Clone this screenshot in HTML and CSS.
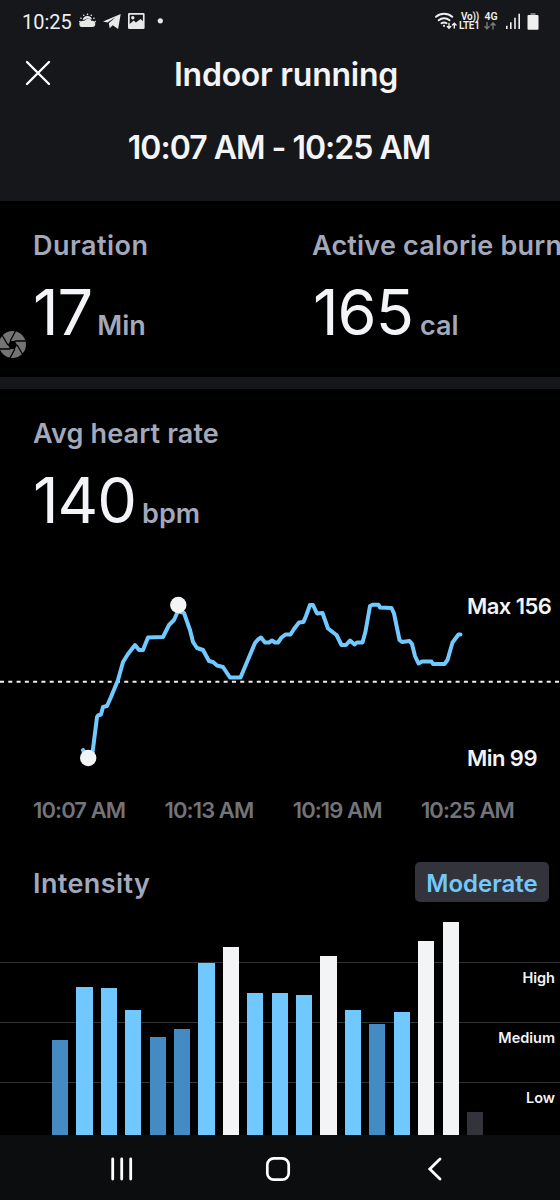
FILE: index.html
```html
<!DOCTYPE html>
<html lang="en">
<head>
<meta charset="utf-8">
<title>Indoor running</title>
<link rel="stylesheet" href="styles.css">
</head>
<body>
<div class="screen">
  <header class="header">
    <div class="status">
      <span class="clock">10:25</span>
      <svg class="status-left" width="90" height="20" viewBox="78 11 90 20" fill="#e8e8e8">
        <path d="M83.500 27a3 3 0 0 1-.3-6c.8-.3 1.500-.2 1.900.1a4.300 4.300 0 0 1 7.600-.2c2-.4 3.700 1 3.600 3.200a3 3 0 0 1-3 2.900z"/>
        <path d="M83.700 19.600a5 5 0 0 1 9.300-.6l-1.400.5a4.600 4.600 0 0 0-6.500.6z"/>
        <g stroke="#e8e8e8" stroke-width="1.500" stroke-linecap="round"><path d="M88.500 14.300v.1M84.700 15.200l.1.100M92.300 15.200l-.1.100M81.900 18.200l.1.100M95 18.200l-.1.100M80.800 21.500h.1M96.300 21.500h-.1"/></g>
        <path d="M104 21.500 121.700 14l-2.600 15-5.400-3.700-3 2.900-.9-4.900 6.800-6-8.200 5.200z"/>
        <path fill-rule="evenodd" d="M130.300 13h14a1.300 1.300 0 0 1 1.300 1.300v13.500a1.300 1.300 0 0 1-1.300 1.300h-14a1.300 1.300 0 0 1-1.300-1.300V14.300a1.300 1.300 0 0 1 1.300-1.300zm.4 1.700v9.300l4-3.500 2.200 2 4.700-3.500 2.300 2.300v-6.600z"/>
        <circle cx="133.800" cy="17.800" r="1.700"/>
        <circle cx="161.300" cy="20.800" r="2.600"/>
      </svg>
      <svg class="status-wifi" width="22" height="18" viewBox="436 12 22 18" fill="none" stroke="#efefef" stroke-width="1.900" stroke-linecap="round">
        <path d="M437 16.800a12.500 12.500 0 0 1 16.200 0M439.700 20.300a8.300 8.300 0 0 1 10.800 0M442.500 23.300a4.300 4.300 0 0 1 5 0"/>
        <circle cx="445" cy="25.800" r="1.100" fill="#efefef" stroke="none"/>
        <path stroke-width="1.400" d="M450 23.500v4.500M448.300 26.500l1.700 1.800 1.700-1.800M455.300 28v-4.500M453.500 25l1.800-1.800 1.800 1.800"/>
      </svg>
      <span class="volte"><span>Vo))</span><span>LTE1</span></span>
      <span class="fourg"><span>4G</span>
        <svg width="12" height="8" viewBox="0 0 12 8" fill="none" stroke="#77797c" stroke-width="1.400"><path d="M3 0v6.500M.5 4.200 3 6.800l2.500-2.600M9 7.500V1M6.500 3.500 9 .9l2.500 2.600"/></svg>
      </span>
      <svg class="status-right" width="34" height="18" viewBox="505 12 34 18" fill="#efefef">
        <path d="M506 25.800h1.600v3.200H506zM510 22.200h1.600V29H510zM514.200 17.800h1.600V29h-1.600zM518.400 13.800h1.600V29h-1.600z"/>
        <path fill="#77797c" d="M530.500 13h5v2h-5z"/><rect x="527.500" y="15" width="11" height="14.700" rx="1"/>
      </svg>
    </div>
    <div class="title-row">
      <svg class="close" width="28" height="28" viewBox="0 0 28 28" fill="none" stroke="#fff" stroke-width="2.300" stroke-linecap="round"><path d="M3 3 25 25M25 3 3 25"/></svg>
      <h1 class="title">Indoor running</h1>
    </div>
    <div class="period">10:07 AM - 10:25 AM</div>
  </header>

  <section class="metrics">
    <div class="metric">
      <div class="label dur">Duration</div>
      <div class="reading"><span class="value">17</span><span class="unit min-unit">Min</span></div>
    </div>
    <div class="metric">
      <div class="label active">Active calorie burn</div>
      <div class="reading"><span class="value">165</span><span class="unit">cal</span></div>
    </div>
    <svg class="shutter" width="27" height="28" viewBox="0 0 27 28"><circle cx="12.500" cy="13.500" r="13.500" fill="#747474"/><path d="M10.200 10h4.600l2.300 4-2.300 4h-4.600l-2.300-4z" fill="#000"/><g stroke="#000" stroke-width="1.300"><path d="M10.200 10 15.500 0M14.800 10H25.500M17.100 14 23 24M14.800 18 9.500 28M10.200 18H0M7.900 14 2 4"/></g></svg>
  </section>

  <section class="heart">
    <div class="label avg">Avg heart rate</div>
    <div class="reading"><span class="value">140</span><span class="unit bpm">bpm</span></div>
    <div class="plot">
      <svg class="line" width="560" height="200" viewBox="0 580 560 200" fill="none">
        <path d="M0 681.700H560" stroke="#f1f0e9" stroke-width="2" stroke-dasharray="4 4.284"/>
        <path d="M83 750 86 756 92 756 93 749 97 717 98 715.500 101 714.500 103 707 107 706 111 697 118 680 123 662 128 654 135 645 139 650 143 650 148 637.500 163 637 169 625 174 620 178 611 184 613 190 630 193 642 197 648 203 650 209 661 213 662 217 665.500 223 667 230 677.500 240.500 677.500 255 643 258 639.500 261 637.500 265 642.500 269 642.500 272 640.500 275 642.500 278 642.500 281.500 637.500 285.500 634.500 290.500 634.500 294 629 299 622.500 303.500 622 306 616 310 605 313 605 317 613.500 322.500 613 328 628.500 336.500 635 341.500 645 346 645 350 640.500 354.500 644.500 357 642.500 362.500 642.500 365.500 631.500 370 606 372.500 604.700 378.500 604.700 380 607.500 391.500 608 394 613.500 399.500 640 402 642 409.500 641 412 644 415 656 418.500 663.500 422 661.500 431.500 661.500 433 664 444.500 664 447.500 660 452.500 642.500 458.500 634.500 460.500 634.500" stroke="#72c9ff" stroke-width="4" stroke-linejoin="round" stroke-linecap="round"/>
        <circle cx="88.200" cy="758" r="8.200" fill="#f3f4f6"/><circle cx="178.300" cy="605" r="8.200" fill="#f3f4f6"/>
      </svg>
      <div class="extremes"><span>Max 156</span><span>Min 99</span></div>
    </div>
    <div class="times"><span>10:07 AM</span><span>10:13 AM</span><span>10:19 AM</span><span>10:25 AM</span></div>
  </section>

  <section class="intensity">
    <div class="intensity-head"><span class="label int">Intensity</span><span class="badge">Moderate</span></div>
    <div class="chart">
      <div class="grid"><div class="zone">High</div><div class="zone">Medium</div><div class="zone">Low</div></div>
      <div class="bars">
        <i class="bar dim" style="height:95px"></i><i class="bar" style="height:148.500px"></i><i class="bar" style="height:147px"></i><i class="bar" style="height:125px"></i><i class="bar dim" style="height:98px"></i><i class="bar dim" style="height:106px"></i><i class="bar" style="height:172px"></i><i class="bar peak" style="height:188px"></i><i class="bar" style="height:142px"></i><i class="bar" style="height:142px"></i><i class="bar" style="height:140px"></i><i class="bar peak" style="height:179px"></i><i class="bar" style="height:125px"></i><i class="bar dim" style="height:111px"></i><i class="bar" style="height:123.500px"></i><i class="bar peak" style="height:194px"></i><i class="bar peak" style="height:213.500px"></i><i class="bar rest" style="height:23px"></i>
      </div>
    </div>
  </section>

  <nav class="nav">
    <svg width="24" height="28" viewBox="0 0 24 28" stroke="#fff" stroke-width="2.800" stroke-linecap="round"><path d="M2.700 4V24M11.700 4V24M20.700 4V24"/></svg>
    <svg width="28" height="28" viewBox="0 0 28 28" fill="none" stroke="#fff" stroke-width="2.700"><rect x="3.300" y="3.300" width="21.400" height="21.400" rx="6.500"/></svg>
    <svg width="24" height="28" viewBox="0 0 24 28" fill="none" stroke="#fff" stroke-width="2.800" stroke-linecap="round"><path d="M18 4 7.800 14 18 24"/></svg>
  </nav>
</div>
</body>
</html>
```
FILE: styles.css
```css
* { box-sizing: border-box; }
body { margin: 0; background: #000; font-family: Inter, "Liberation Sans", sans-serif; }
.screen { width: 560px; height: 1200px; overflow: hidden; display: flex; flex-direction: column; color: #f3f4f7; }
.header { height: 201px; background: #16171a; }
.status { height: 42px; display: flex; align-items: flex-start; padding: 11px 21px 0 22px; font-family: Roboto, sans-serif; color: #efefef; }
.clock { width: 56px; font-size: 20px; line-height: 23px; letter-spacing: 0; }
.status-left { flex: none; }
.status-wifi { flex: none; margin: 1px 2px 0 268px; }
.volte, .fourg { display: flex; flex-direction: column; font-weight: 600; line-height: 9px; padding-top: 1px; }
.volte { width: 22px; font-size: 10px; letter-spacing: -.2px; }
.volte span:first-child { padding-left: 2px; }
.fourg { width: 25px; padding-left: 4px; font-size: 10.500px; gap: 1px; }
.status-right { flex: none; margin-top: 1px; }
.title-row { height: 62px; display: grid; grid-template-columns: 52px 1fr; align-items: center; padding-left: 24px; }
.title { margin: 0; padding: 4px 64px 0 0; font-size: 32px; line-height: 40px; font-weight: 600; white-space: nowrap; text-align: center; letter-spacing: -.25px; }
.period { padding: 24px 2px 0 0; text-align: center; font-size: 32px; line-height: 40px; font-weight: 600; letter-spacing: -1px; }
.metrics { height: 188px; border-bottom: 12px solid #16171a; padding: 27px 0 0 33px; display: grid; grid-template-columns: 280px 1fr; position: relative; }
.label { color: #a3a8bb; font-size: 27px; line-height: 36px; font-weight: 600; white-space: nowrap; }
.dur { letter-spacing: .5px; }
.active { letter-spacing: .2px; margin-left: -1px; }
.avg { letter-spacing: .15px; }
.int { letter-spacing: .4px; }
.reading { display: flex; align-items: baseline; height: 80px; margin-top: 8px; line-height: 80px; white-space: nowrap; }
.value { font-size: 63px; font-weight: 400; letter-spacing: -1px; }
.unit { font-size: 27px; font-weight: 600; color: #a3a8bb; margin-left: 7px; letter-spacing: 0; }
.min-unit { margin-left: 5px; }
.bpm { margin-left: 6px; }
.shutter { position: absolute; left: 0; top: 130px; }
.heart { height: 451px; padding-top: 27px; }
.heart > .label, .heart > .reading { margin-left: 33px; }
.plot { height: 200px; margin-top: 40px; display: grid; }
.line, .extremes { grid-area: 1 / 1; }
.extremes { padding: 12px 0 8px 467px; display: flex; flex-direction: column; justify-content: space-between; font-size: 22px; line-height: 28px; font-weight: 600; letter-spacing: -.55px; }
.times { display: flex; justify-content: space-between; padding: 16px 46px 0 33px; font-size: 22px; line-height: 28px; font-weight: 600; letter-spacing: -.9px; color: #737479; }
.intensity { height: 295px; }
.intensity-head { height: 84px; padding: 22px 11px 0 33px; display: flex; justify-content: space-between; align-items: flex-start; }
.intensity-head .label { padding-top: 4px; }
.badge { width: 134px; height: 40px; border-radius: 5px; background: #33343b; color: #72c9ff; font-size: 24px; font-weight: 600; line-height: 43px; text-align: center; }
.chart { height: 211px; display: grid; align-items: end; }
.grid, .bars { grid-area: 1 / 1; }
.grid { height: 173px; }
.zone { height: 60px; border-top: 1px solid #303235; padding: 5px 5px 0; text-align: right; font-size: 14.500px; line-height: 20px; font-weight: 600; }
.zone:last-child { height: 53px; }
.bars { height: 211px; display: flex; align-items: flex-end; gap: 8.220px; padding-left: 52px; }
.bar { width: 16.200px; background: #70c8ff; }
.dim { background: #438bc2; }
.peak { background: #f3f4f6; }
.rest { background: #33343b; }
.nav { height: 65px; background: #0c0d0f; display: flex; justify-content: space-between; align-items: center; padding: 3px 114px 0 110px; }
```
